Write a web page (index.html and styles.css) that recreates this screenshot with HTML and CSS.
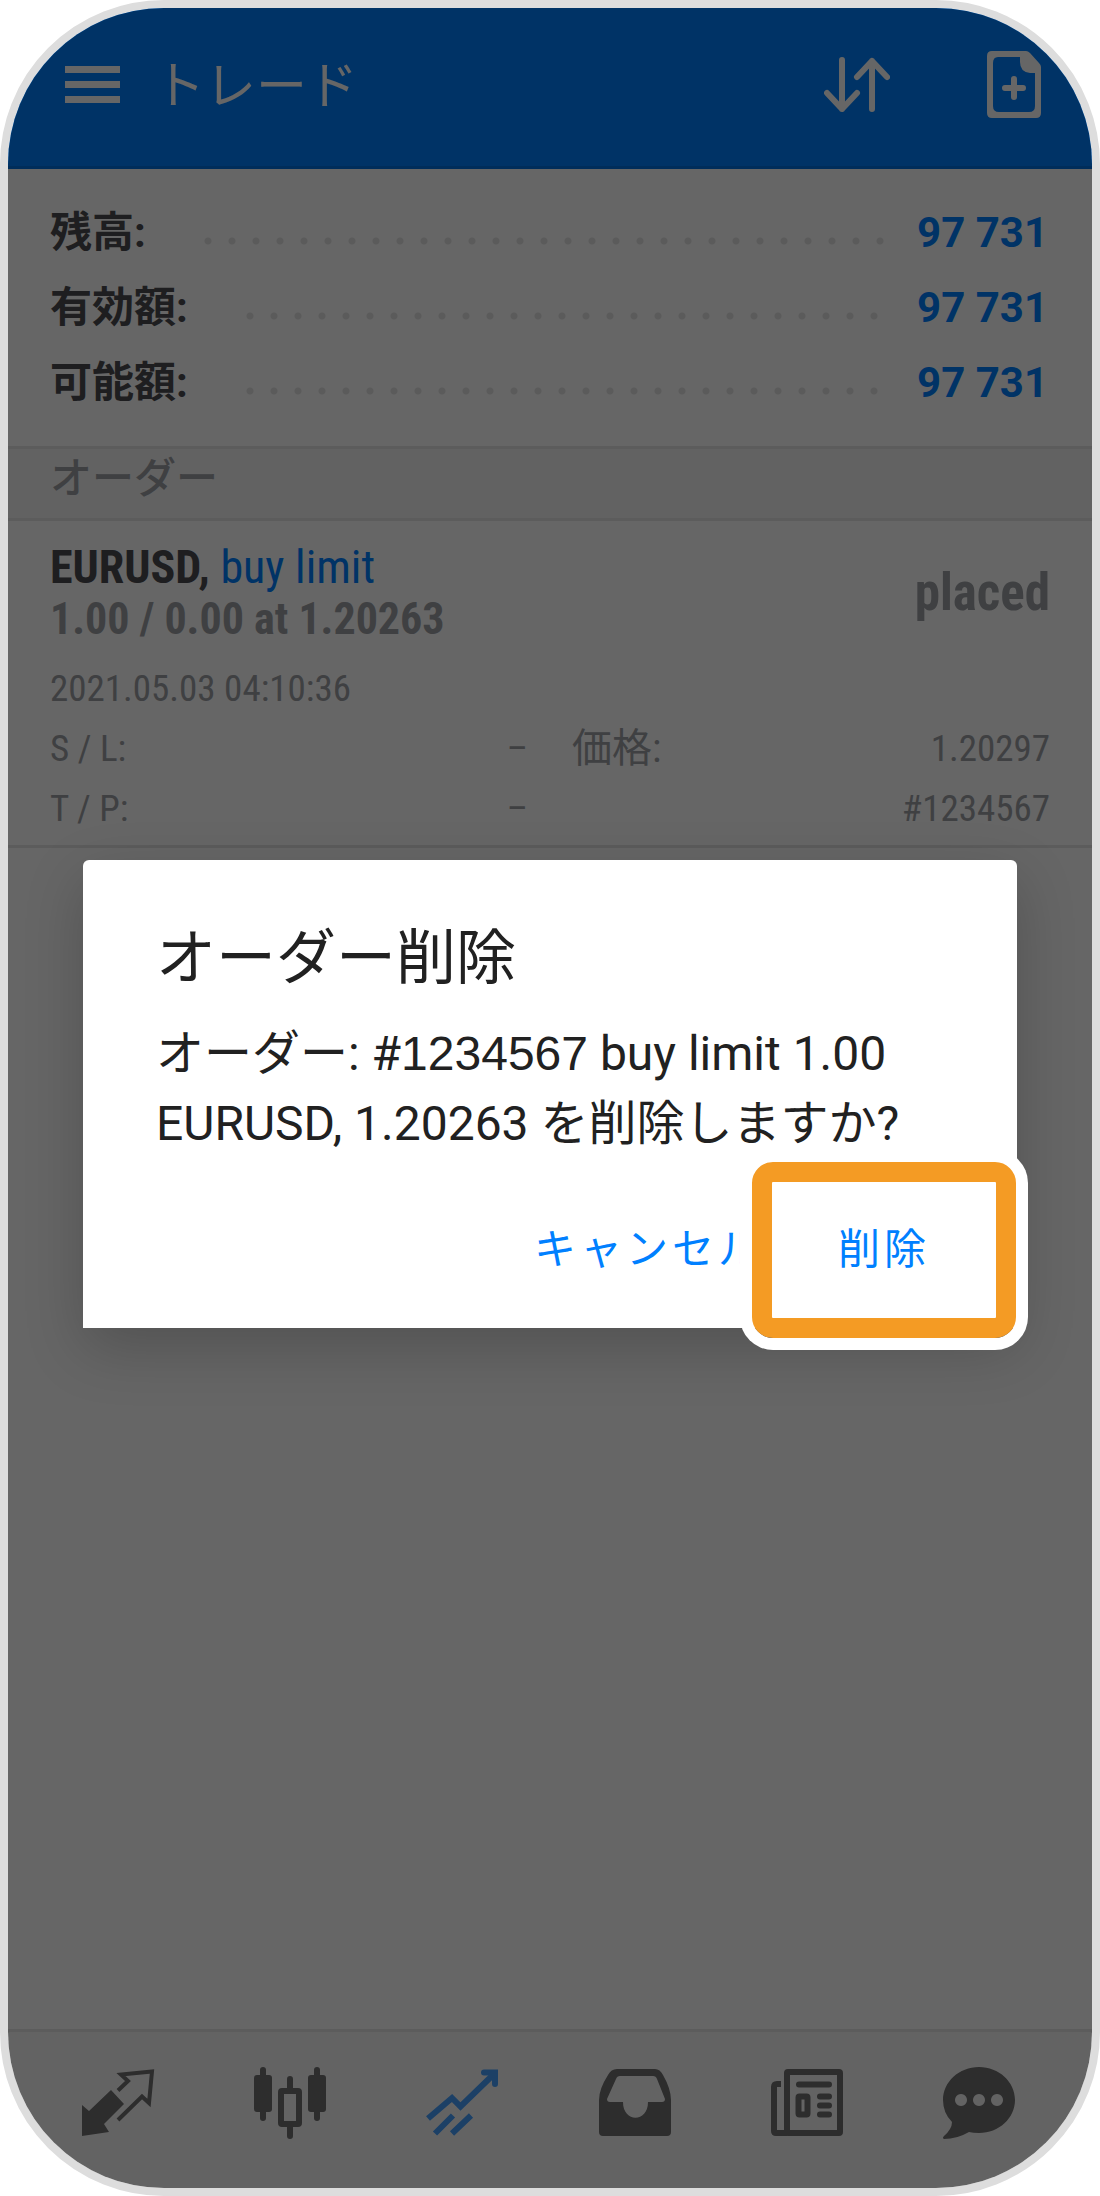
FILE: index.html
```html
<!DOCTYPE html>
<html lang="ja">
<head>
<meta charset="utf-8">
<meta name="viewport" content="width=device-width, initial-scale=1">
<title>トレード</title>
<link rel="stylesheet" href="styles.css">
</head>
<body>
<div class="phone">
  <header class="app-bar">
    <button class="icon-button" type="button" aria-label="メニュー">
      <svg width="55" height="37" viewBox="0 0 55 37" fill="currentColor"><path d="M0 0h55v7H0zM0 15h55v7H0zM0 30h55v7H0z"/></svg>
    </button>
    <h1 class="app-title">トレード</h1>
    <div class="app-actions">
      <button class="icon-button" type="button" aria-label="並べ替え">
        <svg width="66" height="55" viewBox="0 0 66 55" fill="none" stroke="currentColor" stroke-width="6" stroke-linecap="round" stroke-linejoin="round"><path d="M18 3v49M3 36l15 16 15-16M48 52V4M33 20L48 4l15 16"/></svg>
      </button>
      <button class="icon-button" type="button" aria-label="新規オーダー">
        <svg width="54" height="67" viewBox="0 0 54 67" fill="currentColor"><path fill-rule="evenodd" d="M5 0H39Q41 0 43 2L52 12Q54 14 54 16V62Q54 67 49 67H5Q0 67 0 62V5Q0 0 5 0ZM11 6Q6 6 6 12V55Q6 61 12 61H42Q48 61 48 55V22H43Q33 21 33 11V6Z"/><path d="M27 28v18M18 37h18" fill="none" stroke="currentColor" stroke-width="6" stroke-linecap="round"/></svg>
      </button>
    </div>
  </header>

  <main class="content">
    <dl class="balances">
      <div class="balance"><dt>残高:</dt><dd>97 731</dd></div>
      <div class="balance"><dt>有効額:</dt><dd>97 731</dd></div>
      <div class="balance"><dt>可能額:</dt><dd>97 731</dd></div>
    </dl>
    <h2 class="section-title">オーダー</h2>
    <article class="order">
      <div class="order-head">
        <div>
          <p class="order-line"><strong>EURUSD,</strong> <span class="order-type">buy limit</span></p>
          <p class="order-line order-volume">1.00 / 0.00 at 1.20263</p>
        </div>
        <p class="order-state">placed</p>
      </div>
      <p class="order-time">2021.05.03 04:10:36</p>
      <div class="order-details">
        <p class="detail"><span>S / L:</span><span>–</span></p>
        <p class="detail"><span class="price-label">価格:</span><span>1.20297</span></p>
        <p class="detail"><span>T / P:</span><span>–</span></p>
        <p class="detail detail-end"><span>#1234567</span></p>
      </div>
    </article>
  </main>

  <nav class="tab-bar">
    <a class="tab" href="#quotes" aria-label="気配値">
      <svg class="tab-icon" viewBox="0 0 72 72" fill="currentColor"><path d="M0 38L7 44 29 23 42 37 22 57 27 65 0 69Z"/><path d="M36 23.5L46 14 39 7.500 70 4.500 67 36 60 29.500 36 53" fill="none" stroke="currentColor" stroke-width="4"/></svg>
    </a>
    <a class="tab" href="#chart" aria-label="チャート">
      <svg class="tab-icon" viewBox="0 0 72 72" fill="currentColor"><rect x="6" width="6" height="54" rx="3"/><rect y="8" width="18" height="37" rx="3"/><rect x="60" width="6" height="54" rx="3"/><rect x="54" y="8" width="18" height="37" rx="3"/><path d="M33 21V12a3 3 0 0 1 6 0v9zM33 60v9a3 3 0 0 0 6 0v-9z"/><rect x="27" y="24" width="18" height="33" rx="1" fill="none" stroke="currentColor" stroke-width="6"/></svg>
    </a>
    <a class="tab tab-active" href="#trade" aria-label="トレード" aria-current="page">
      <svg class="tab-icon" viewBox="0 0 72 72" fill="none" stroke="currentColor" stroke-width="6"><path d="M2 51.500L26 31 34.500 39.500 68 7M9 66.500L27 48.500M26 66.500L45 48.500"/><path d="M58 5.500H69V17" stroke-linecap="round"/></svg>
    </a>
    <a class="tab" href="#history" aria-label="履歴">
      <svg class="tab-icon" viewBox="0 0 72 72" fill="currentColor"><path fill-rule="evenodd" d="M18 2H56Q61 2 64 8 72 22 72 33V65Q72 69 68 69H4Q0 69 0 65V33Q0 22 9 8 12 2 18 2ZM21 9Q18 9 17 12L8 32Q8 35 11 35H24C24 56 49 56 49 35H63Q66 35 66 32L58 12Q57 9 54 9Z"/></svg>
    </a>
    <a class="tab" href="#news" aria-label="ニュース">
      <svg class="tab-icon" viewBox="0 0 72 72" fill="none" stroke="currentColor" stroke-width="6"><rect x="16" y="5" width="53" height="61" rx="1"/><path d="M10 17H6Q3 17 3 20V64Q3 66 5 66H16"/><rect x="27.500" y="29.500" width="9" height="18" rx="1"/><path d="M28 17.500H58M49 29.500H58M49 38.500H58M49 47.500H58" stroke-linecap="round"/></svg>
    </a>
    <a class="tab" href="#messages" aria-label="メッセージ">
      <svg class="tab-icon" viewBox="0 0 72 72" fill="currentColor"><path fill-rule="evenodd" d="M36 0C56 0 72 15 72 33S56 66 36 66Q30 66 26 65 14 72 1 72-1 71 1 69 9 62 9 55 0 46 0 33C0 15 16 0 36 0ZM18 27a6 6 0 1 0 .01 0ZM36 27a6 6 0 1 0 .01 0ZM54 27a6 6 0 1 0 .01 0Z"/></svg>
    </a>
  </nav>

  <div class="scrim">
    <section class="dialog" role="dialog" aria-modal="true" aria-labelledby="dialog-title">
      <h2 class="dialog-title" id="dialog-title">オーダー削除</h2>
      <p class="dialog-text">オーダー: #<span class="ticket">1234567</span> buy limit 1.00 <span>EURUSD, 1.20263 を削除しますか?</span></p>
      <div class="dialog-actions">
        <button class="dialog-button" type="button">キャンセル</button>
        <button class="dialog-button highlighted" type="button">削除</button>
      </div>
    </section>
  </div>
</div>
</body>
</html>
```

FILE: styles.css
```css
* {
  box-sizing: border-box;
}

body,
h1,
h2,
p,
dl,
dd {
  margin: 0;
}

body {
  background: #fff;
  font-family: Roboto, "Noto Sans CJK JP", sans-serif;
}

button {
  padding: 0;
  border: 0;
  background: none;
  color: inherit;
  font: inherit;
}

svg {
  display: block;
}

.phone {
  position: relative;
  display: flex;
  flex-direction: column;
  min-height: 100vh;
  overflow: hidden;
  border: 8px solid #ddd;
  border-radius: 164px;
  background: #fff;
}

/* App bar */
.app-bar {
  display: flex;
  align-items: center;
  gap: 34px;
  height: 161px;
  padding: 0 51px 5px 57px;
  border-bottom: 3px solid #0070e0;
  background: #0080ff;
  color: #fff;
}

.app-title {
  padding-top: 4px;
  font-size: 51px;
  font-weight: 400;
  line-height: 72px;
}

.app-actions {
  display: flex;
  align-items: center;
  gap: 97px;
  margin-left: auto;
}

/* Account summary */
.content {
  flex: 1;
}

.balances {
  padding: 26px 44px 26px 42px;
}

.balance {
  display: flex;
  gap: 28px;
  font-size: 42px;
  font-weight: 700;
  line-height: 75px;
}

.balance::after {
  content: "";
  flex: 1;
  order: 1;
  margin-left: 30px;
  background: radial-gradient(circle at 4px 46px, #e3e3e3 3px, transparent 4px) 0 0 / 24px 100%;
}

.balance dt {
  color: #4b4b50;
}

.balance dd {
  order: 2;
  color: #0080ff;
}

.section-title {
  padding: 0 42px 9px;
  border: solid #e6e6e6;
  border-width: 3px 0;
  background: #f6f6f6;
  color: #9da0a5;
  font-size: 42px;
  font-weight: 500;
  line-height: 60px;
}

/* Order */
.order {
  padding: 20px 42px 6px;
  border-bottom: 3px solid #e6e6e6;
  color: #9da0a5;
  font-family: "Roboto Condensed", "Liberation Sans Narrow", "Noto Sans CJK JP", sans-serif;
  font-size: 37px;
  line-height: 60px;
}

.order-head {
  display: flex;
  align-items: center;
  justify-content: space-between;
}

.order-line {
  font-size: 46px;
  line-height: 52px;
}

.order-line strong {
  color: #4b4b50;
}

.order-type {
  color: #0080ff;
}

.order-volume,
.order-state {
  font-weight: 700;
}

.order-volume {
  font-size: 44px;
}

.order-state {
  font-size: 51px;
}

.order-time {
  padding-top: 14px;
}

.order-details {
  display: grid;
  grid-template-columns: 1fr 1fr;
  column-gap: 44px;
}

.detail {
  display: flex;
  justify-content: space-between;
}

.detail-end {
  justify-content: flex-end;
}

.price-label {
  font-size: 40px;
}

/* Bottom tabs */
.tab-bar {
  display: grid;
  grid-template-columns: repeat(6, 1fr);
  padding: 35px 27px 49px 24px;
  border-top: 3px solid #e6e6e6;
  background: #f8f8f8;
}

.tab {
  display: flex;
  justify-content: center;
  color: #707070;
}

.tab-active {
  color: #46a0ff;
}

.tab-icon {
  width: 72px;
  height: 72px;
  overflow: visible;
}

/* Confirmation dialog over the dimmed screen */
.scrim {
  position: absolute;
  inset: 0;
  display: flex;
  align-items: center;
  padding: 0 75px 8px;
  background: rgba(0, 0, 0, 0.6);
}

.dialog {
  flex: 1;
  padding: 63px 63px 48px 73px;
  border-radius: 6px 6px 0 0;
  background: #fff;
  box-shadow: 0 20px 60px rgba(0, 0, 0, 0.2);
  color: #212121;
}

.dialog-title {
  font-size: 60px;
  font-weight: 400;
  line-height: 72px;
}

.dialog-text {
  padding-top: 24px;
  font-size: 48px;
  line-height: 70px;
}

.dialog-text .ticket {
  font-family: "Liberation Sans", sans-serif;
}

.dialog-actions {
  display: flex;
  justify-content: flex-end;
  gap: 26px;
  padding-top: 61px;
}

.dialog-button {
  height: 60px;
  padding: 0 24px;
  color: #0080ff;
  font-size: 42px;
  letter-spacing: 4px;
  line-height: 60px;
}

.highlighted {
  position: relative;
}

.highlighted::after {
  content: "";
  position: absolute;
  inset: -58px -62px;
  border: 20px solid #f49b24;
  border-radius: 21px;
  box-shadow: 0 0 0 12px #fff;
}
```
